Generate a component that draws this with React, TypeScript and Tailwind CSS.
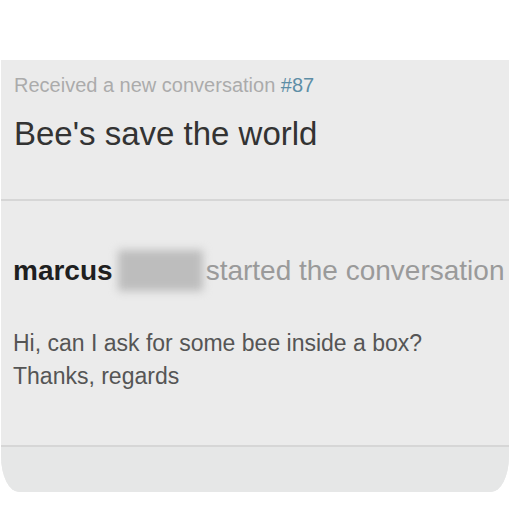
const App = () => {
    return (
        <div className="min-h-[512px] w-[512px] bg-white pt-[60px] pl-px font-['Liberation_Sans',Arial,sans-serif]">
            <div className="w-[508px] bg-[#ebebeb] rounded-b-[18px_36px] overflow-hidden">
                <div className="px-[13px] pt-[13px] h-[139px]">
                    <p className="text-[20px] leading-[24px] text-[#ababab] whitespace-nowrap">
                        Received a new conversation <span className="text-[#5d8ea6]">#87</span>
                    </p>
                    <h1 className="mt-[18px] text-[33px] leading-[38px] text-[#333333] whitespace-nowrap">Bee's save the world</h1>
                </div>
                <div className="h-[2px] bg-[#d6d6d6]" />
                <div className="h-[244px] px-[12px] pt-[49px]">
                    <div className="flex items-center whitespace-nowrap">
                        <span className="text-[28px] leading-[32px] font-bold text-[#1f1f1f]">marcus</span>
                        <span className="ml-[5px] mr-[3px] h-[41px] w-[85px] shrink-0 bg-[#bdbdbd] blur-[4px]" />
                        <span className="text-[28px] leading-[32px] text-[#9a9a9a]">started the conversation</span>
                    </div>
                    <p className="mt-[36px] text-[23px] leading-[33px] text-[#555555]">
                        Hi, can I ask for some bee inside a box?
                        <br />
                        Thanks, regards
                    </p>
                </div>
                <div className="h-[2px] bg-[#d6d6d6]" />
                <div className="h-[45px] bg-[#e6e7e7]" />
            </div>
        </div>
    );
};

export default App;
